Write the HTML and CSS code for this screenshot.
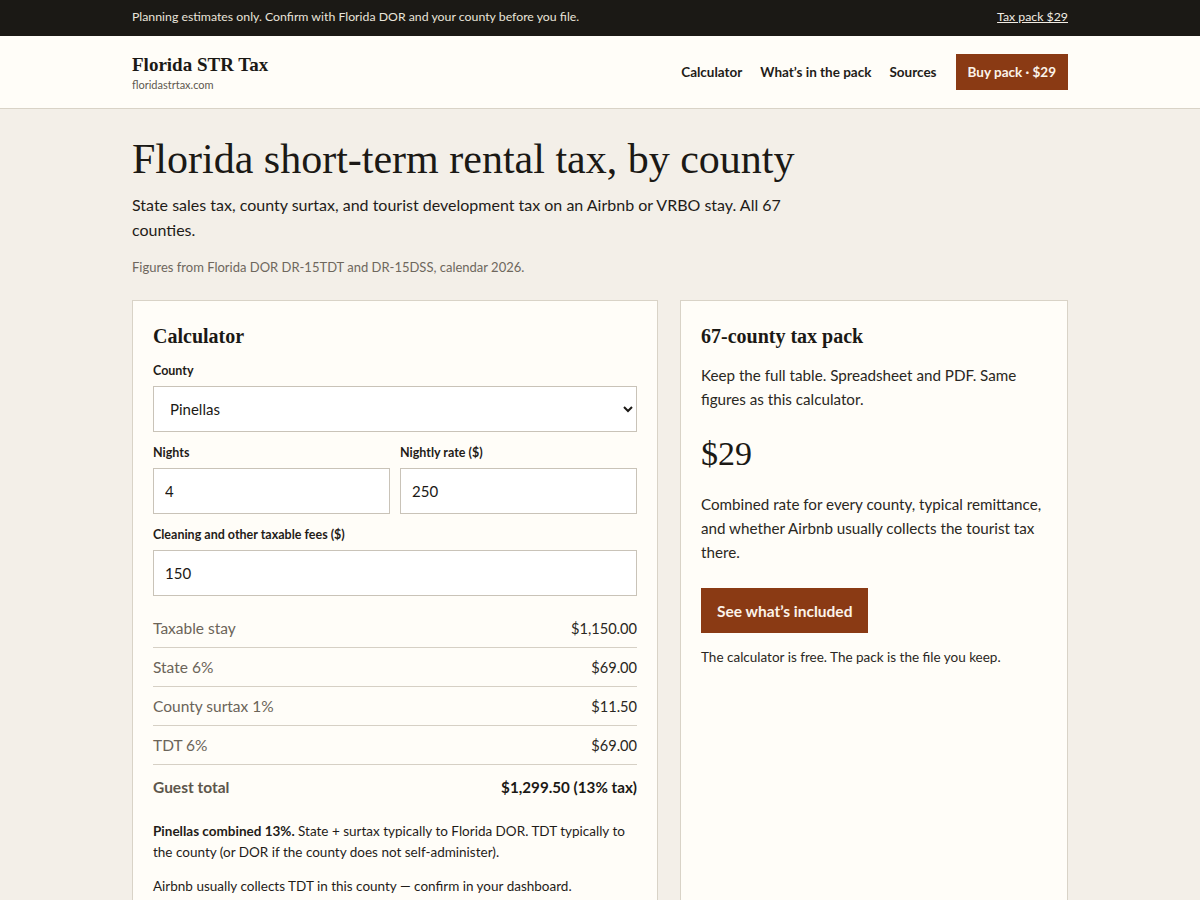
FILE: index.html
```html
<!DOCTYPE html>
<html lang="en">
<head>
<meta charset="utf-8">
<title>Florida STR Tax</title>
<link rel="stylesheet" href="styles.css">
</head>
<body>
<div class="topbar">
  <div class="wrap topbar-inner">
    <span>Planning estimates only. Confirm with Florida DOR and your county before you file.</span>
    <a href="#" class="topbar-link">Tax pack $29</a>
  </div>
</div>
<header class="header">
  <div class="wrap header-inner">
    <div class="brand">
      <div class="brand-name">Florida STR Tax</div>
      <div class="brand-domain">floridastrtax.com</div>
    </div>
    <nav class="nav">
      <a href="#">Calculator</a>
      <a href="#">What’s in the pack</a>
      <a href="#">Sources</a>
      <a href="#" class="btn btn-sm">Buy pack · $29</a>
    </nav>
  </div>
</header>
<main class="wrap main">
  <h1 class="title">Florida short-term rental tax, by county</h1>
  <p class="lede">State sales tax, county surtax, and tourist development tax on an Airbnb or VRBO stay. All 67 counties.</p>
  <p class="source">Figures from Florida DOR DR-15TDT and DR-15DSS, calendar 2026.</p>
  <div class="grid">
    <section class="card">
      <h2 class="card-title">Calculator</h2>
      <label class="field">
        <span class="label">County</span>
        <select class="input select"><option>Pinellas</option></select>
      </label>
      <div class="row2">
        <label class="field">
          <span class="label">Nights</span>
          <input class="input" value="4">
        </label>
        <label class="field">
          <span class="label">Nightly rate ($)</span>
          <input class="input" value="250">
        </label>
      </div>
      <label class="field">
        <span class="label">Cleaning and other taxable fees ($)</span>
        <input class="input" value="150">
      </label>
      <div class="results">
        <div class="res-row"><span>Taxable stay</span><span class="val">$1,150.00</span></div>
        <div class="res-row"><span>State 6%</span><span class="val">$69.00</span></div>
        <div class="res-row"><span>County surtax 1%</span><span class="val">$11.50</span></div>
        <div class="res-row"><span>TDT 6%</span><span class="val">$69.00</span></div>
        <div class="res-row total"><span>Guest total</span><span class="val">$1,299.50 (13% tax)</span></div>
      </div>
      <p class="note"><strong>Pinellas combined 13%.</strong> State + surtax typically to Florida DOR. TDT typically to the county (or DOR if the county does not self-administer).</p>
      <p class="note">Airbnb usually collects TDT in this county — confirm in your dashboard.</p>
    </section>
    <aside class="card pack">
      <h2 class="card-title">67-county tax pack</h2>
      <p class="pack-text">Keep the full table. Spreadsheet and PDF. Same figures as this calculator.</p>
      <div class="price">$29</div>
      <p class="pack-text">Combined rate for every county, typical remittance, and whether Airbnb usually collects the tourist tax there.</p>
      <a href="#" class="btn btn-lg">See what’s included</a>
      <p class="fine">The calculator is free. The pack is the file you keep.</p>
    </aside>
  </div>
</main>
</body>
</html>
```
FILE: styles.css
```css
* { box-sizing: border-box; }
html, body { margin: 0; padding: 0; }
body {
  background: #f3efe8;
  color: #1f1c18;
  font-family: Lato, "Noto Sans", sans-serif;
}
a { color: inherit; text-decoration: none; }
.wrap { width: 936px; margin: 0 auto; }

.topbar { background: #1b1915; color: #e9e4da; font-size: 12.3px; height: 36px; }
.topbar-inner { display: flex; justify-content: space-between; align-items: center; height: 33px; }
.topbar-link { text-decoration: underline; color: #f1ece3; }

.header { background: #fffdf8; border-bottom: 1px solid #d9d3c7; height: 73px; }
.header-inner { display: flex; justify-content: space-between; align-items: center; height: 72px; }
.brand-name { font-family: "Liberation Serif", serif; font-weight: 700; font-size: 19px; color: #1b1915; line-height: 22px; }
.brand-domain { font-size: 11px; color: #5e584f; margin-top: 2px; }
.nav { display: flex; align-items: center; gap: 18px; font-size: 13.5px; font-weight: 700; color: #1f1c18; }
.btn { background: #8a3a14; color: #fbf3ea; font-weight: 700; display: inline-flex; align-items: center; }
.btn-sm { height: 36px; padding: 0 12px; margin-left: 1px; }
.btn-lg { height: 45px; padding: 0 16px; font-size: 15.5px; }

.main { padding-top: 24px; }
.title { font-family: "Liberation Serif", serif; font-weight: 400; font-size: 42px; line-height: 52px; margin: 0 0 7px; color: #1b1915; }
.lede { font-size: 16px; line-height: 25px; margin: 0; max-width: 680px; color: #1f1c18; }
.source { font-size: 13px; color: #6e675d; margin: 15px 0 0; line-height: 20px; }

.grid { display: grid; grid-template-columns: 526px 388px; gap: 22px; margin-top: 23px; align-items: start; }
.card { background: #fffdf8; border: 1px solid #d9d3c7; padding: 20px 20px 10px; }
.pack { min-height: 620px; }
.card-title { font-family: "Liberation Serif", serif; font-weight: 700; font-size: 20px; line-height: 28px; margin: 1px 0 13px; color: #1b1915; }

.field { display: flex; flex-direction: column; margin-bottom: 13px; }
.label { font-size: 12.5px; font-weight: 700; color: #1f1c18; line-height: 16px; margin-bottom: 7px; }
.input { height: 46px; border: 1px solid #c9c3b8; background: #fff; font-family: Lato, "Noto Sans", sans-serif; font-size: 15px; color: #1b1915; padding: 0 11px; width: 100%; border-radius: 0; }
.select { padding: 0 8px 0 12px; }
.row2 { display: grid; grid-template-columns: 1fr 1fr; gap: 10px; }

.results { margin-top: 4px; }
.res-row { display: flex; justify-content: space-between; align-items: center; height: 39px; border-bottom: 1px solid #d6d0c5; font-size: 15.5px; color: #6b6459; }
.res-row .val { color: #2a2722; font-size: 14.6px; }
.res-row.total { border-bottom: none; height: 44px; font-weight: 700; color: #5d564b; }
.res-row.total .val { color: #1b1915; font-weight: 700; font-size: 15.2px; }

.note { font-size: 13.5px; line-height: 21px; color: #1f1c18; margin: 12px 0 0; }
.note + .note { margin-top: 13px; }

.pack-text { font-size: 15.2px; line-height: 24px; margin: 0; color: #2a2722; }
.price { font-family: "Liberation Serif", serif; font-size: 34px; line-height: 40px; margin: 23px 0 18px; color: #1b1915; }
.pack .btn-lg { margin-top: 24px; }
.fine { font-size: 13.5px; color: #2a2722; margin: 14px 0 0; line-height: 20px; }
```
